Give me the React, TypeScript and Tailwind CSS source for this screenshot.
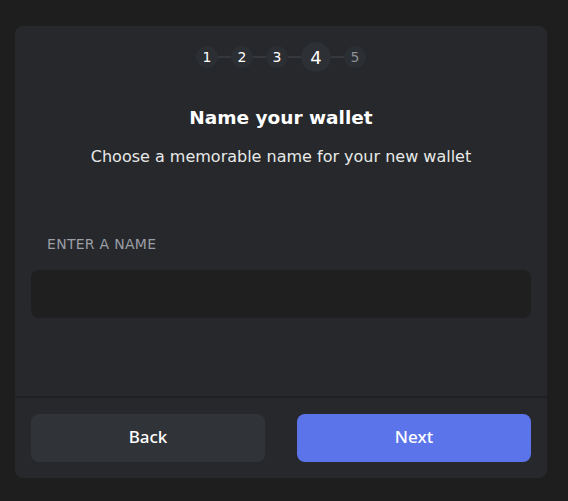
import React from "react";

const steps = [1, 2, 3, 4, 5];

function Stepper() {
  return (
    <div className="flex items-center justify-center h-[30px]">
      {steps.map((s, i) => (
        <React.Fragment key={s}>
          {i > 0 && <div className="w-[13px] h-[2px] bg-[#34373b]" />}
          {s === 4 ? (
            <div className="w-[30px] h-[30px] rounded-full bg-[#2d3034] flex items-center justify-center text-[18px] font-medium text-white">
              {s}
            </div>
          ) : (
            <div
              className={
                "w-[22px] h-[22px] rounded-full bg-[#2b2e32] flex items-center justify-center text-[14px] font-medium " +
                (s === 5 ? "text-[#8b8f96]" : "text-white")
              }
            >
              {s}
            </div>
          )}
        </React.Fragment>
      ))}
    </div>
  );
}

export default function App() {
  return (
    <div
      className="w-[568px] h-[501px] bg-[#1e1e1e] pt-[26px] px-[15px]"
      style={{ fontFamily: '"DejaVu Sans", sans-serif' }}
    >
      <div className="w-[532px] h-[452px] bg-[#26282b] rounded-lg flex flex-col overflow-hidden">
        <div className="flex-1 flex flex-col px-4 pt-4">
          <Stepper />
          <h1 className="mt-[32px] text-center text-[18.5px] leading-[28px] font-bold text-white">
            Name your wallet
          </h1>
          <p className="mt-[13px] text-center text-[16px] leading-[24px] text-[#e8e8e8]">
            Choose a memorable name for your new wallet
          </p>
          <label className="mt-[65px] pl-4 text-[14px] leading-[20px] text-[#9a9ea6] tracking-[0.02em]">
            ENTER A NAME
          </label>
          <input
            className="mt-4 h-12 w-full rounded-lg bg-[#1f1f1f] outline-none px-4 text-white"
            type="text"
          />
        </div>
        <div className="border-t-2 border-[#1f2023] h-[82px] px-4 pt-4 flex gap-8" style={{ fontFamily: '"Noto Sans", sans-serif' }}>
          <button className="flex-1 h-12 rounded-lg bg-[#303438] text-white text-[17px] font-medium leading-[24px] pb-[2px]">
            Back
          </button>
          <button className="flex-1 h-12 rounded-lg bg-[#5c74ea] text-white text-[17px] font-medium leading-[24px] pb-[2px]">
            Next
          </button>
        </div>
      </div>
    </div>
  );
}
